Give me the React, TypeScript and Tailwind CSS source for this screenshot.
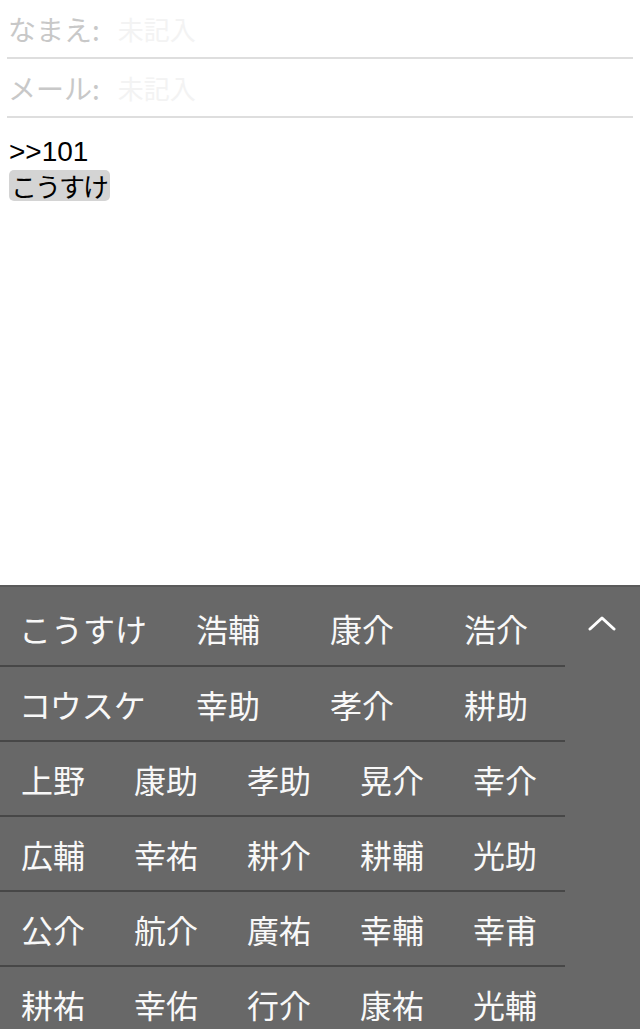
const firstRows = [
  ["こうすけ", "浩輔", "康介", "浩介"],
  ["コウスケ", "幸助", "孝介", "耕助"],
];

const gridRows = [
  ["上野", "康助", "孝助", "晃介", "幸介"],
  ["広輔", "幸祐", "耕介", "耕輔", "光助"],
  ["公介", "航介", "廣祐", "幸輔", "幸甫"],
  ["耕祐", "幸佑", "行介", "康祐", "光輔"],
];

function Field({ label }: { label: string }) {
  return (
    <div className="mx-[7px] flex h-[59px] items-center border-b-2 border-[#dedede]">
      <span className="pl-[1px] text-[28px] text-[#c8c8c8]">{label}</span>
      <span className="ml-[18px] text-[26px] text-[#f3f3f3]">未記入</span>
    </div>
  );
}

export default function App() {
  return (
    <div
      className="relative flex h-[1029px] w-[640px] flex-col overflow-hidden bg-white"
      style={{ fontFamily: '"Noto Sans CJK JP", "Noto Sans", sans-serif' }}
    >
      <Field label="なまえ:" />
      <Field label="メール:" />

      <div className="flex flex-col items-start px-[9px] pt-[20px] text-black">
        <div className="font-['Liberation_Sans',sans-serif] text-[28px] leading-[28px]">&gt;&gt;101</div>
        <div className="mt-[4px] flex h-[31px] items-center rounded-[5px] bg-[#d4d4d4] pl-[2px] pr-[3px] text-[26px] leading-[26px] tracking-[-2px]">
          こうすけ
        </div>
      </div>

      <div className="mt-auto h-[444px] border-t-2 border-[#5a5a5a] bg-[#686868] text-[32px] text-[#f8f8f8]">
        <div className="flex">
          <div className="w-[565px] shrink-0">
            {firstRows.map((row, i) => (
              <div
                key={i}
                className={`flex items-center border-b-2 border-[#474747] pl-[19px] ${i === 0 ? "h-[80px] pt-[4px]" : "h-[75px]"}`}
              >
                {row.map((w, j) => (
                  <span key={j} className={j === 0 ? "w-[177px] shrink-0" : "w-[134px] shrink-0"}>
                    {w}
                  </span>
                ))}
              </div>
            ))}
            {gridRows.map((row, i) => (
              <div
                key={i}
                className="flex h-[75px] items-center border-b-2 border-[#474747] pl-[21px]"
              >
                {row.map((w, j) => (
                  <span key={j} className="w-[113px] shrink-0">
                    {w}
                  </span>
                ))}
              </div>
            ))}
          </div>
          <div className="flex flex-1 justify-center pt-[28px]">
            <svg width="28" height="16" viewBox="0 0 28 16" className="mr-[1px]">
              <path d="M2 14 L14 3 L26 14" fill="none" stroke="#ffffff" strokeWidth="3" strokeLinecap="round" strokeLinejoin="round" />
            </svg>
          </div>
        </div>
      </div>
    </div>
  );
}
